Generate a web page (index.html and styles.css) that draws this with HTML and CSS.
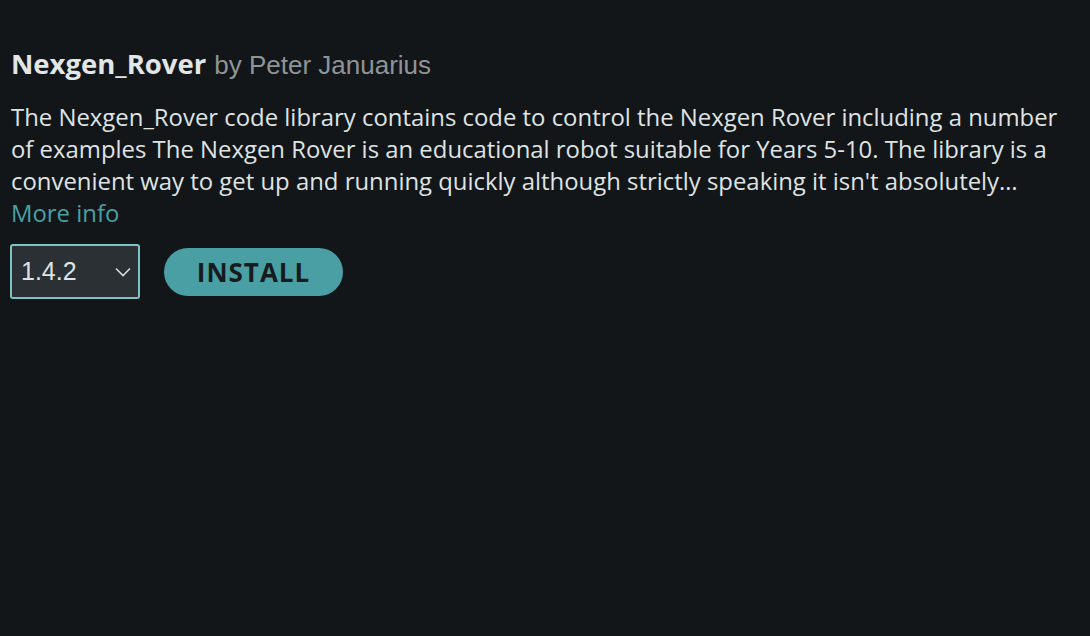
FILE: index.html
```html
<!DOCTYPE html>
<html>
<head>
<meta charset="utf-8">
<link rel="stylesheet" href="styles.css">
</head>
<body>
<div class="lib">
  <div class="header">
    <span class="name">Nexgen_Rover</span>
    <span class="author">by Peter Januarius</span>
  </div>
  <div class="desc">The Nexgen_Rover code library contains code to control the Nexgen Rover including a number of examples The Nexgen Rover is an educational robot suitable for Years 5-10. The library is a convenient way to get up and running quickly although strictly speaking it isn't absolutely…</div>
  <a class="more">More info</a>
  <div class="actions">
    <div class="select">
      <span class="ver">1.4.2</span>
      <svg class="chev" width="16" height="10" viewBox="0 0 16 10"><path d="M1 1.5 L8 8.5 L15 1.5" fill="none" stroke="#d8dcdc" stroke-width="1.6"/></svg>
    </div>
    <button class="install">INSTALL</button>
  </div>
</div>
</body>
</html>
```
FILE: styles.css
```css
html, body {
  margin: 0;
  padding: 0;
  background: #121619;
  height: 100%;
}
.lib {
  padding: 46px 11px 0 11px;
  font-family: "Open Sans", sans-serif;
}
.header {
  display: flex;
  align-items: baseline;
  gap: 8px;
  line-height: 36px;
}
.name {
  font-family: "Open Sans", sans-serif;
  font-weight: 700;
  font-size: 27.5px;
  color: #e2e6e6;
}
.author {
  font-family: "Liberation Sans", Arial, sans-serif;
  font-size: 26px;
  color: #8f9496;
}
.desc {
  margin-top: 18px;
  font-size: 23.9px;
  line-height: 32px;
  color: #dfe3e3;
  width: 1062px;
}
.more {
  display: block;
  font-size: 23.9px;
  line-height: 32px;
  color: #4a9fa5;
}
.actions {
  display: flex;
  align-items: center;
  gap: 24px;
  margin-top: 15px;
  margin-left: -1px;
}
.select {
  box-sizing: border-box;
  width: 130px;
  height: 55px;
  border: 2px solid #7ec2c4;
  border-radius: 3px;
  background: #2b3034;
  display: flex;
  align-items: center;
  justify-content: space-between;
  padding: 0 7px 0 9px;
}
.ver {
  font-family: "Liberation Sans", Arial, sans-serif;
  font-size: 25px;
  color: #dfe3e3;
}
.chev {
  display: block;
}
.install {
  width: 179px;
  height: 48px;
  border: none;
  border-radius: 24px;
  background: #4a9fa5;
  color: #161b1e;
  font-family: "Open Sans", sans-serif;
  font-weight: 700;
  font-size: 26px;
  letter-spacing: 1px;
  padding: 0;
}
```
